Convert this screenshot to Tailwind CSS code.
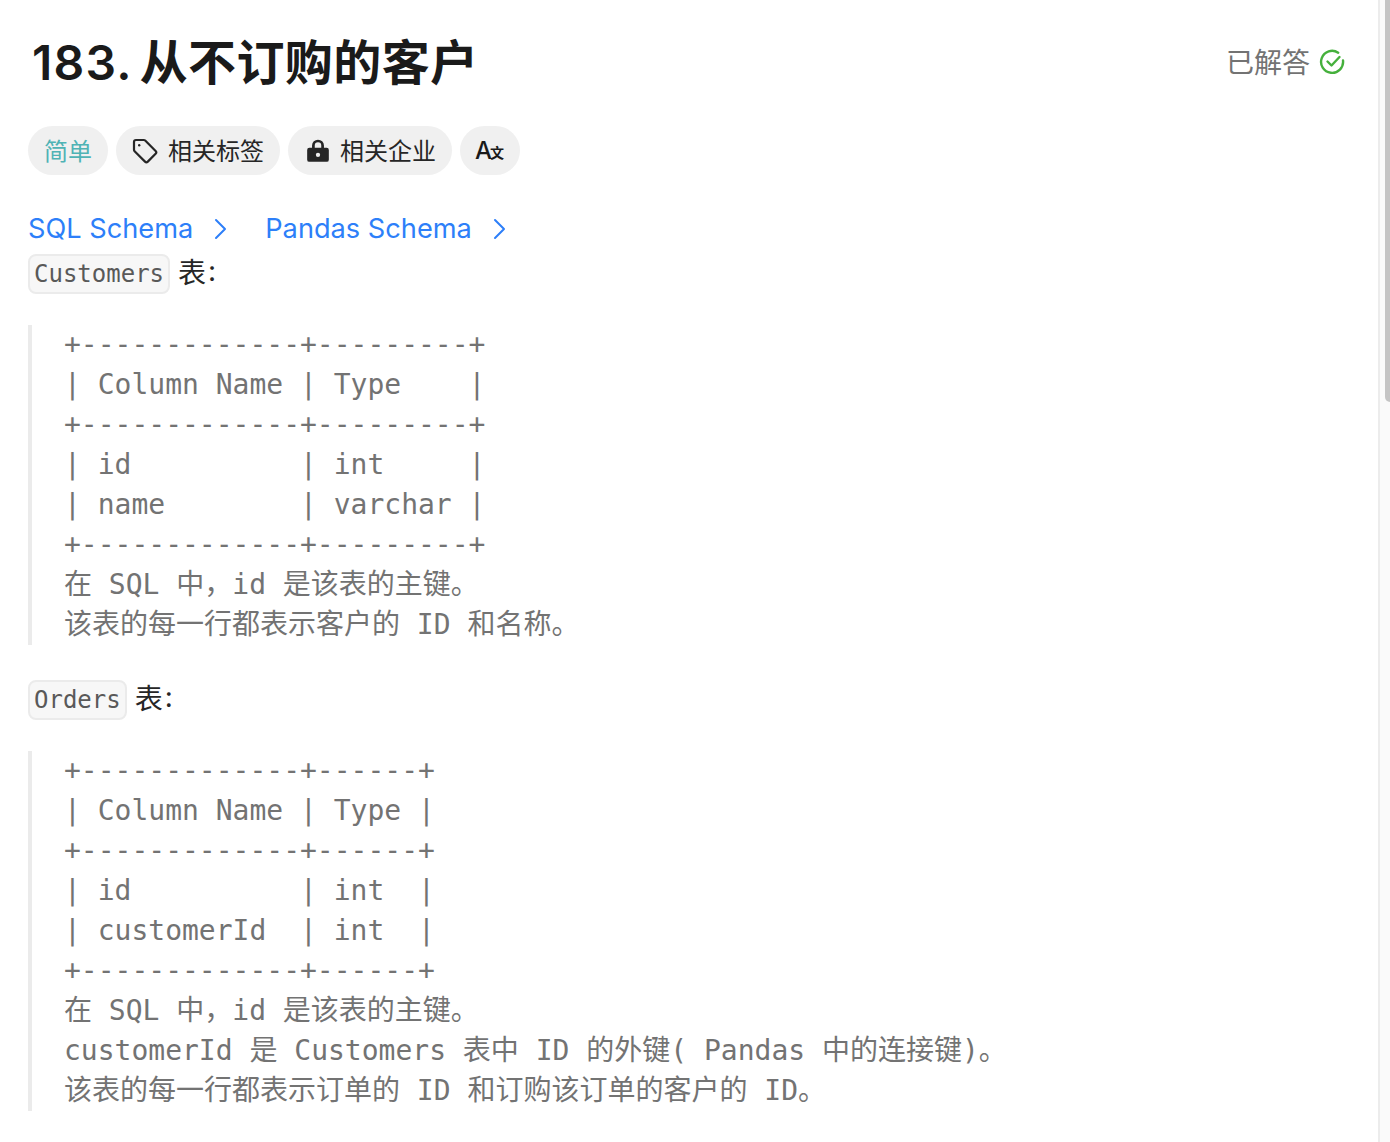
<!DOCTYPE html>
<html lang="zh-CN">
  <head>
    <meta charset="UTF-8" />
    <script src="https://cdn.jsdelivr.net/npm/@tailwindcss/browser@4"></script>
    <title>183. 从不订购的客户</title>
  </head>
  <body class="bg-white overflow-hidden font-['Inter','Noto_Sans_CJK_SC',sans-serif]">
    <div class="flex h-[1142px]">
      <main class="flex-1 pl-7 pr-[33px] pt-[30px] min-w-0">
        <!-- title -->
        <div class="flex items-center justify-between h-[64px]">
          <h1 class="flex items-center pt-[2px] pl-[4px] text-[48px] leading-[64px] font-semibold text-[#1a1a1a]">
            <span class="tracking-[1.2px]">183.</span>
            <span class="ml-[7px] tracking-[0.4px]">从不订购的客户</span>
          </h1>
          <div class="flex items-center gap-[9px] text-[28px] text-[#737373]">
            <span class="pt-[2px]">已解答</span>
            <svg class="w-[26px] h-[26px]" viewBox="0 0 26 26" fill="none" stroke="#45b03c" stroke-width="2.4" stroke-linecap="round" stroke-linejoin="round">
              <path d="M24 11.5a11 11 0 1 1-4.800-7.800" />
              <path d="M8.500 12.500l4 4 8-8.500" />
            </svg>
          </div>
        </div>

        <!-- tags -->
        <div class="flex gap-2 mt-[32px] text-[24px] text-[#262626]">
          <span class="flex items-center h-[49px] px-4 pt-[2px] rounded-full bg-[#f0f0f0] text-[#4fb3b5]">简单</span>
          <span class="flex items-center gap-[10px] h-[49px] px-4 rounded-full bg-[#f0f0f0]">
            <svg class="w-[26px] h-[26px]" viewBox="0 0 26 26" fill="none" stroke="#262626" stroke-width="2.200" stroke-linejoin="round">
              <path d="M2 4a2 2 0 0 1 2-2h7.800a2 2 0 0 1 1.400.6l10.400 10.400a2 2 0 0 1 0 2.800l-7.800 7.800a2 2 0 0 1-2.800 0L2.600 13.200a2 2 0 0 1-.6-1.400z" />
              <circle cx="7.200" cy="7.200" r="1.200" fill="#262626" stroke="none" />
            </svg>
            <span class="pt-[2px]">相关标签</span>
          </span>
          <span class="flex items-center gap-[9px] h-[49px] pl-[17px] pr-4 rounded-full bg-[#f0f0f0]">
            <svg class="w-[26px] h-[26px]" viewBox="0 0 24 24" fill="#262626">
              <path fill-rule="evenodd" d="M6.500 9V7a5.500 5.500 0 0 1 11 0v2h2.500a2 2 0 0 1 2 2v9a2 2 0 0 1-2 2H4a2 2 0 0 1-2-2v-9a2 2 0 0 1 2-2zm2.500 0h6V7a3 3 0 0 0-6 0zM12 13.500a2 2 0 1 0 0 4 2 2 0 0 0 0-4z" />
            </svg>
            <span class="pt-[2px]">相关企业</span>
          </span>
          <span class="flex items-center justify-center w-[60px] h-[49px] pr-[1px] rounded-full bg-[#f0f0f0] text-[#1a1a1a]">
            <span class="text-[24px] font-medium">A</span><span class="text-[14px] font-semibold -ml-[2px] mt-[4px]">文</span>
          </span>
        </div>

        <!-- schema links -->
        <div class="flex items-center mt-[34px] h-[40px] text-[27.2px] text-[#2d7ff9]">
          <span>SQL Schema</span>
          <svg class="w-[14px] h-[22px] ml-5" viewBox="0 0 14 22" fill="none" stroke="#2d7ff9" stroke-width="2" stroke-linecap="round" stroke-linejoin="round"><path d="M3 2l9 9-9 9" /></svg>
          <span class="ml-[38px]">Pandas Schema</span>
          <svg class="w-[14px] h-[22px] ml-5" viewBox="0 0 14 22" fill="none" stroke="#2d7ff9" stroke-width="2" stroke-linecap="round" stroke-linejoin="round"><path d="M3 2l9 9-9 9" /></svg>
        </div>

        <!-- Customers -->
        <p class="mt-[5px] h-[40px] flex items-center text-[28px] text-[#262626]">
          <code class="inline-block h-[40px] leading-[36px] px-[4px] rounded-[8px] border-2 border-[#ebebeb] bg-[#f7f7f7] text-[24px] text-[#595959] font-['DejaVu_Sans_Mono',monospace]">Customers</code>
          <span class="ml-2 -mt-[2px]">表<span class="inline-block ml-[2px] -translate-y-[2px]">:</span></span>
        </p>
        <pre class="mt-[31px] border-l-4 border-[#ebebeb] pl-8 text-[28px] leading-[40px] text-[#737373] font-['DejaVu_Sans_Mono','Noto_Sans_CJK_SC',monospace]">+-------------+---------+
| Column Name | Type    |
+-------------+---------+
| id          | int     |
| name        | varchar |
+-------------+---------+
在 SQL 中，id 是该表的主键。
该表的每一行都表示客户的 ID 和名称。</pre>

        <!-- Orders -->
        <p class="mt-[35px] h-[40px] flex items-center text-[28px] text-[#262626]">
          <code class="inline-block h-[40px] leading-[36px] px-[4px] rounded-[8px] border-2 border-[#ebebeb] bg-[#f7f7f7] text-[24px] text-[#595959] font-['DejaVu_Sans_Mono',monospace]">Orders</code>
          <span class="ml-2 -mt-[2px]">表<span class="inline-block ml-[2px] -translate-y-[2px]">:</span></span>
        </p>
        <pre class="mt-[31px] border-l-4 border-[#ebebeb] pl-8 text-[28px] leading-[40px] text-[#737373] font-['DejaVu_Sans_Mono','Noto_Sans_CJK_SC',monospace]">+-------------+------+
| Column Name | Type |
+-------------+------+
| id          | int  |
| customerId  | int  |
+-------------+------+
在 SQL 中，id 是该表的主键。
customerId 是 Customers 表中 ID 的外键( Pandas 中的连接键)。
该表的每一行都表示订单的 ID 和订购该订单的客户的 ID。</pre>
      </main>

      <!-- scrollbar -->
      <div class="w-[12px] shrink-0 border-l-2 border-[#ececec] bg-[#fafafa] pl-[5px]">
        <div class="h-[402px] rounded-bl-[6px] bg-[#c4c4c4]"></div>
      </div>
    </div>
  </body>
</html>
